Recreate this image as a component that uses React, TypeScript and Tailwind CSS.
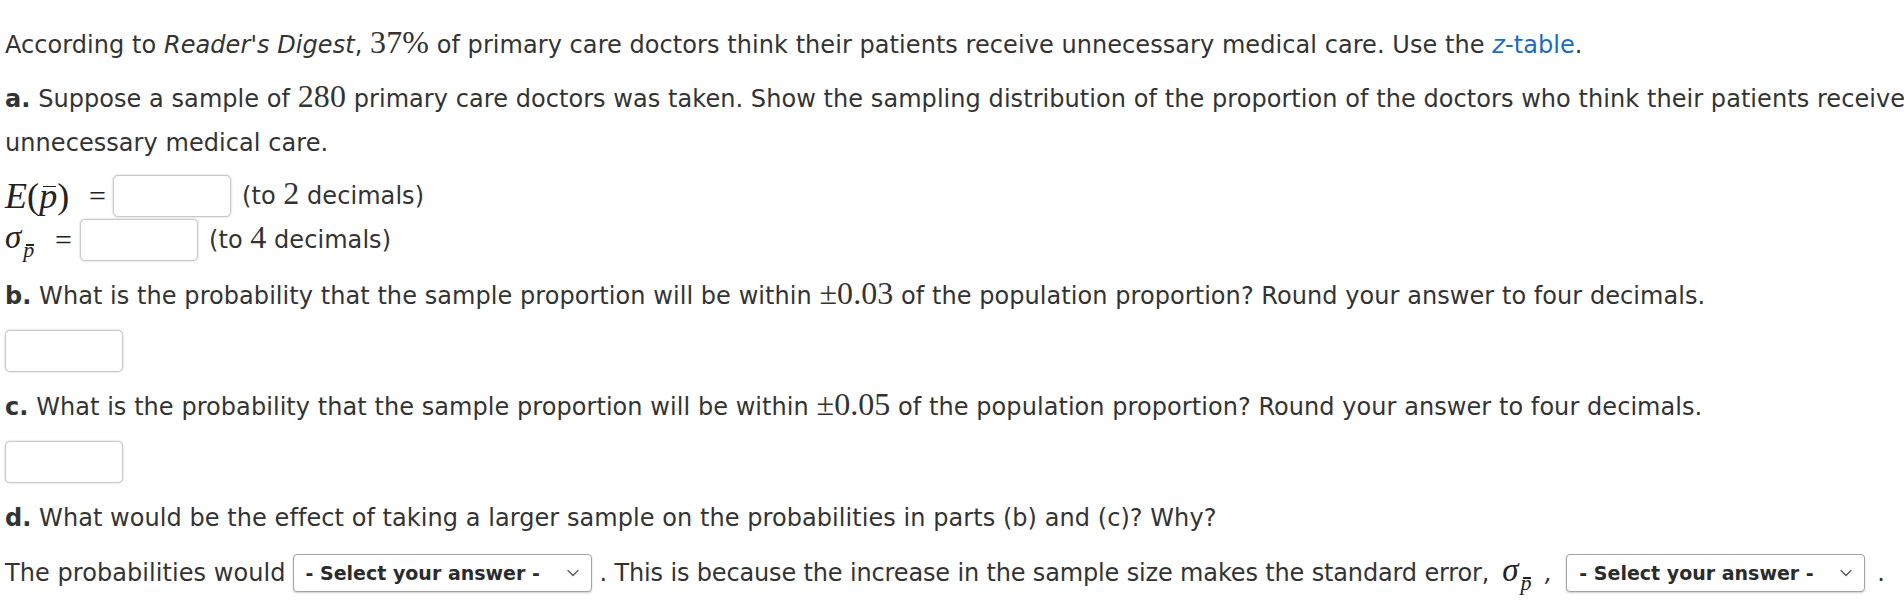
import { ChevronDown } from "lucide-react";

const num = "font-['Liberation_Serif',serif] text-[32px] leading-none";
const serif = "font-['Liberation_Serif',serif]";

function AnswerBox({ className = "" }: { className?: string }) {
  return (
    <span
      className={
        "inline-block h-[42px] w-[118px] rounded-[5px] border border-[#c9c9c9] bg-white shadow-[0_0_2px_rgba(0,0,0,0.25)] " +
        className
      }
    />
  );
}

function SelectBox() {
  return (
    <span className="inline-flex h-[38px] w-[299px] items-center justify-between rounded-[4px] border border-[#a3a3a3] bg-white pl-[12px] pr-[8px] shadow-[0_1px_2px_rgba(0,0,0,0.2)]">
      <span className="text-[19px] font-bold tracking-normal text-[#2b2b2b]">- Select your answer -</span>
      <ChevronDown className="size-[20px] text-[#555]" strokeWidth={1.5} />
    </span>
  );
}

// p with a bar over it
function PBar({ size, bar }: { size: string; bar: string }) {
  return (
    <span className={`relative inline-block ${size} leading-none italic ${serif}`}>
      p
      <span className={`absolute left-[22%] right-[4%] h-[1.5px] bg-[#222] ${bar}`} />
    </span>
  );
}

function Sigma() {
  return (
    <span className="inline-flex items-baseline text-[#222]">
      <span className={`${serif} text-[33px] italic leading-none`}>σ</span>
      <span className="relative top-[9px] ml-[2px]">
        <PBar size="text-[22px]" bar="top-[5px]" />
      </span>
    </span>
  );
}

export default function App() {
  return (
    <div className="min-h-[602px] bg-white pl-[5px] pt-[23px] font-['DejaVu_Sans',Verdana,sans-serif] text-[24px] leading-[44px] tracking-[0.06px] text-[#333] whitespace-nowrap">
      <p>
        According to <i>Reader's Digest</i>, <span className={num}>37%</span> of primary care doctors think their
        patients receive unnecessary medical care. Use the{" "}
        <span className="text-[#1a6bc4]">
          <i>z</i>-table
        </span>
        .
      </p>

      <p className="mt-[10px]">
        <b>a.</b> Suppose a sample of <span className={num}>280</span> primary care doctors was taken. Show the sampling
        distribution of the proportion of the doctors who think their patients receive
        <br />
        unnecessary medical care.
      </p>

      <div className="mt-[8px] flex h-[45px] items-center">
        <span className={`w-[84px] ${serif} text-[36px] leading-none text-[#222]`}>
          <i>E</i>(<PBar size="text-[36px]" bar="top-[8px]" />)
        </span>
        <span className={`w-[24px] ${serif} text-[30px] leading-none text-[#222]`}>=</span>
        <AnswerBox />
        <span className="ml-[11px]">
          (to <span className={num}>2</span> decimals)
        </span>
      </div>

      <div className="flex h-[44px] items-center">
        <span className="w-[50px]">
          <Sigma />
        </span>
        <span className={`w-[25px] ${serif} text-[30px] leading-none text-[#222]`}>=</span>
        <AnswerBox />
        <span className="ml-[11px]">
          (to <span className={num}>4</span> decimals)
        </span>
      </div>

      <p className="mt-[12px]">
        <b>b.</b> What is the probability that the sample proportion will be within{" "}
        <span className={num}>±0.03</span> of the population proportion? Round your answer to four decimals.
      </p>
      <div className="mt-[12px] flex">
        <AnswerBox />
      </div>

      <p className="mt-[13px]">
        <b>c.</b> What is the probability that the sample proportion will be within{" "}
        <span className={num}>±0.05</span> of the population proportion? Round your answer to four decimals.
      </p>
      <div className="mt-[12px] flex">
        <AnswerBox />
      </div>

      <p className="mt-[13px]">
        <b>d.</b> What would be the effect of taking a larger sample on the probabilities in parts (b) and (c)? Why?
      </p>

      <div className="mt-[11px] flex h-[44px] items-center">
        <span>The probabilities would</span>
        <span className="ml-[7px] flex">
          <SelectBox />
        </span>
        <span className="ml-[8px] tracking-[-0.15px]">
          . This is because the increase in the sample size makes the standard error,
        </span>
        <span className="ml-[13px]">
          <Sigma />
        </span>
        <span className="ml-[13px] italic">,</span>
        <span className="ml-[14px] flex">
          <SelectBox />
        </span>
        <span className="ml-[12px]">.</span>
      </div>
    </div>
  );
}
